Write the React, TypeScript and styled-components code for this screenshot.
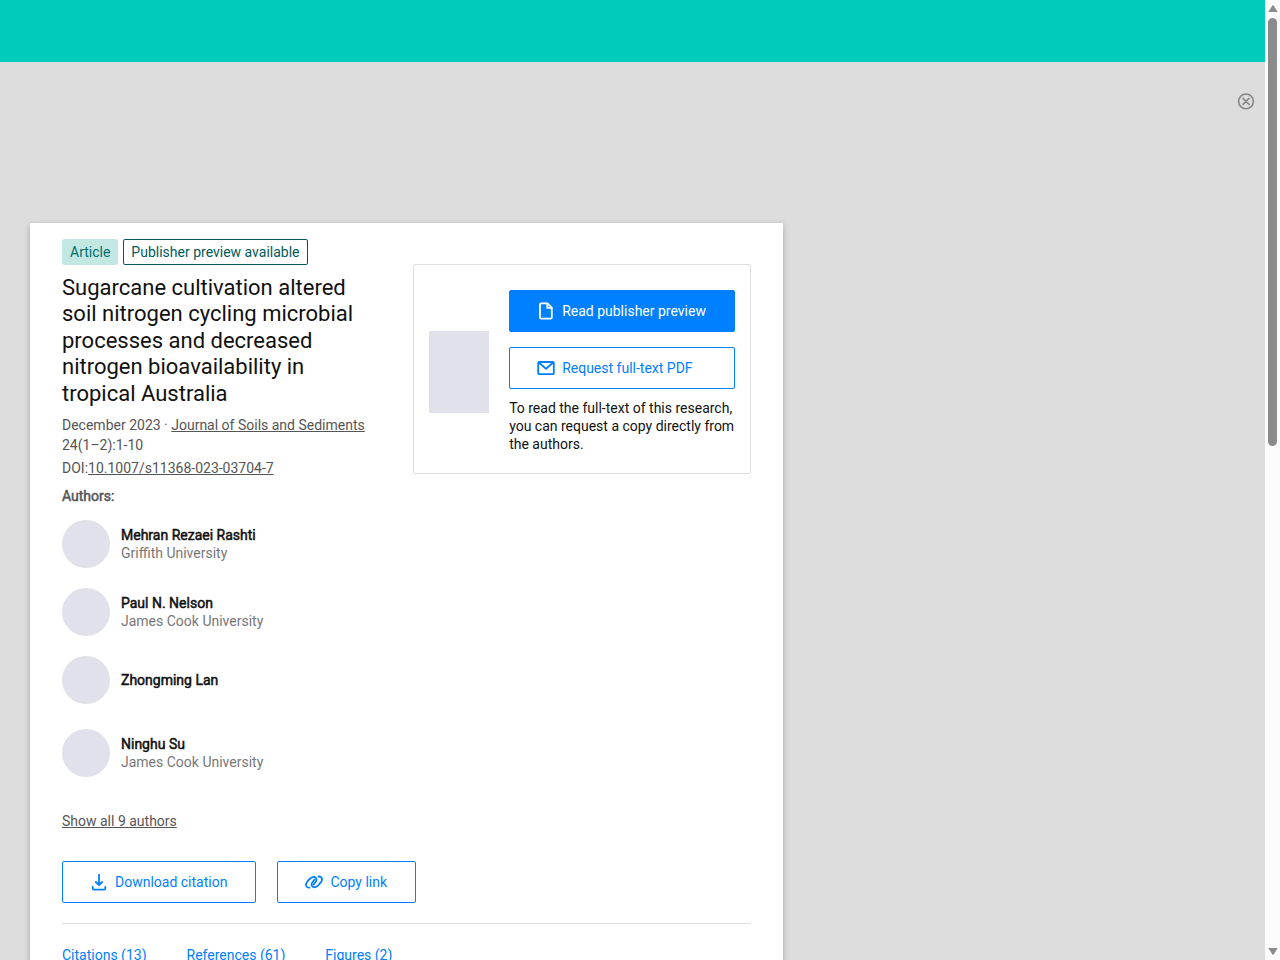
import React from "react";
import styled, { createGlobalStyle, css } from "styled-components";

const GlobalStyle = createGlobalStyle`
  *, *::before, *::after { box-sizing: border-box; }
  body {
    margin: 0;
    font-family: Roboto, "Liberation Sans", sans-serif;
    font-size: 14px;
    line-height: 20px;
    color: #111;
    background: #ddd;
  }
  h1, p, ul { margin: 0; padding: 0; }
`;

const Window = styled.div`
  display: flex;
  height: 100vh;
  overflow: hidden;
`;

const Page = styled.div`
  flex: 1;
  min-width: 0;
  overflow: hidden;
`;

const TopBar = styled.header`
  height: 62px;
  background: #00ccbb;
`;

const AdSpace = styled.div`
  display: flex;
  justify-content: flex-end;
  align-items: flex-start;
  height: 161px;
  padding: 30px 10px 0;
`;

const CloseButton = styled.button`
  display: flex;
  padding: 0;
  border: 0;
  background: none;
  color: #888;
  cursor: pointer;
`;

const Main = styled.main`
  padding: 0 30px;
`;

const Card = styled.article`
  width: 62.5%;
  padding: 16px 32px;
  background: #fff;
  box-shadow: 0 2px 6px rgba(0, 0, 0, 0.25);
`;

const Intro = styled.div`
  display: grid;
  grid-template-columns: minmax(0, 1fr) 338px;
  column-gap: 40px;
  align-items: start;
`;

const Badges = styled.div`
  display: flex;
  gap: 5px;
  white-space: nowrap;
`;

const Badge = styled.span<{ $outlined?: boolean }>`
  height: 26px;
  padding: 2px 7px;
  border: 1px solid ${(p) => (p.$outlined ? "#005a5a" : "#c3e7e3")};
  border-radius: 2px;
  background: ${(p) => (p.$outlined ? "#fff" : "#c3e7e3")};
  color: ${(p) => (p.$outlined ? "#005a5a" : "#00706e")};
`;

const Title = styled.h1`
  margin: 10px 0 8px;
  font-size: 22px;
  line-height: 1.2;
  font-weight: 400;
`;

const Meta = styled.p`
  color: #555;
  & + & { margin-top: 3px; }
`;

const TextLink = styled.a`
  color: #555;
  text-decoration: underline;
`;

const AuthorsLabel = styled.p`
  margin: 8px 0 14px;
  color: #555;
  -webkit-text-stroke: 0.5px #555;
`;

const AuthorList = styled.ul`
  display: flex;
  flex-direction: column;
  gap: 20px;
  list-style: none;
`;

const Author = styled.li<{ $single: boolean }>`
  display: flex;
  align-items: center;
  gap: 11px;
  line-height: 18px;
  ${(p) => p.$single && css`margin-bottom: 5px;`}
`;

const Avatar = styled.div`
  width: 48px;
  height: 48px;
  border-radius: 50%;
  background: #e1e1eb;
`;

const AuthorName = styled.a`
  display: block;
  color: #111;
  text-decoration: none;
  -webkit-text-stroke: 0.5px #111;
`;

const Affiliation = styled.span`
  color: #777;
`;

const ShowAll = styled.p`
  margin: 34px 0 30px;
`;

const AccessPanel = styled.aside`
  display: flex;
  align-items: center;
  gap: 20px;
  margin-top: 25px;
  padding: 25px 15px 20px;
  border: 1px solid #ddd;
  border-radius: 2px;
`;

const Thumbnail = styled.div`
  flex: none;
  width: 60px;
  height: 82px;
  background: #e1e1eb;
`;

const AccessActions = styled.div`
  flex: 1;
  display: flex;
  flex-direction: column;
  gap: 15px;
`;

const AccessNote = styled.p`
  margin-top: -5px;
  line-height: 18px;
`;

const Button = styled.button<{ $primary?: boolean }>`
  display: flex;
  align-items: center;
  gap: 7px;
  height: 42px;
  padding: 0 28px 0 27px;
  border: 1px solid #0080ff;
  border-radius: 2px;
  background: ${(p) => (p.$primary ? "#0080ff" : "#fff")};
  color: ${(p) => (p.$primary ? "#fff" : "#0080ff")};
  font: inherit;
  white-space: nowrap;
  cursor: pointer;
`;

const Actions = styled.div`
  display: flex;
  gap: 21px;
  padding-bottom: 20px;
  border-bottom: 1px solid #ddd;
`;

const Tabs = styled.nav`
  display: flex;
  gap: 40px;
  padding: 21px 0;
`;

const Tab = styled.a`
  color: #0080ff;
  text-decoration: none;
`;

const ScrollTrack = styled.div`
  flex: none;
  display: flex;
  flex-direction: column;
  align-items: center;
  width: 15px;
  padding: 4px 0;
  background: #fcfcfc;
`;

const ScrollThumb = styled.div`
  width: 9px;
  height: 45%;
  margin: 5px 0 auto;
  border-radius: 5px;
  background: #8b8b8b;
`;

const Svg = styled.svg`
  flex: none;
  fill: none;
  stroke: currentColor;
  stroke-linecap: round;
  stroke-linejoin: round;
`;

const FileIcon = () => (
  <Svg width="18" height="18" viewBox="0 0 18 18" strokeWidth="1.8" aria-hidden="true">
    <path d="M4.2 1.4h6.2l4.4 4.3v9.7q0 1.2-1.2 1.2H4.2q-1.2 0-1.2-1.2V2.6q0-1.2 1.2-1.2z" />
    <path d="M10.3 1.7v4.2h4.2" />
  </Svg>
);

const MailIcon = () => (
  <Svg width="18" height="18" viewBox="0 0 18 18" strokeWidth="1.8" aria-hidden="true">
    <rect x="1.2" y="3" width="15.6" height="12.2" rx="1" />
    <path d="M2 3.8l7 6 7-6" />
  </Svg>
);

const DownloadIcon = () => (
  <Svg width="18" height="18" viewBox="0 0 18 18" strokeWidth="1.8" aria-hidden="true">
    <path d="M9 1.6v10.2M5.8 9L9 12.1 12.2 9M2.7 13.8v1.6q0 1.2 1.2 1.2h10.2q1.2 0 1.2-1.2v-1.6" />
  </Svg>
);

const LinkIcon = () => (
  <Svg width="18" height="18" viewBox="0 0 18 18" strokeWidth="1.8" aria-hidden="true">
    <path d="M4.5 14.7C1.1 14.9.1 11.7 1.9 9.3l2.3-2.9C6.2 3.9 9.4 3.2 10.8 4.9c1.1 1.4.7 2.9-.4 4.3l-1.9 2.4" />
    <path d="M13.5 3.5c3.4-.2 4.4 3 2.6 5.4l-2.3 2.9c-2 2.5-5.2 3.2-6.6 1.5-1.1-1.4-.7-2.9.4-4.3l1.9-2.4" />
  </Svg>
);

const CloseIcon = () => (
  <Svg width="18" height="18" viewBox="0 0 18 18" strokeWidth="1.6" aria-hidden="true">
    <circle cx="9" cy="9.4" r="7.4" />
    <path d="M6 6.4l6 6M12 6.4l-6 6" />
  </Svg>
);

const ScrollArrow = ({ down = false }: { down?: boolean }) => (
  <svg width="10" height="9" viewBox="0 0 10 9" fill="#8b8b8b" aria-hidden="true">
    <path
      d={
        down
          ? "M1.2 1h7.6q1 0 .5.8L5.6 7.4q-.6.8-1.2 0L.7 1.8Q.2 1 1.2 1z"
          : "M1.2 8h7.6q1 0 .5-.8L5.6 1.6Q5 .8 4.4 1.6L.7 7.2Q.2 8 1.2 8z"
      }
    />
  </svg>
);

const authors = [
  { name: "Mehran Rezaei Rashti", affiliation: "Griffith University" },
  { name: "Paul N. Nelson", affiliation: "James Cook University" },
  { name: "Zhongming Lan", affiliation: "" },
  { name: "Ninghu Su", affiliation: "James Cook University" },
];

const tabs = ["Citations (13)", "References (61)", "Figures (2)"];

export default function App() {
  return (
    <>
      <GlobalStyle />
      <Window>
        <Page>
          <TopBar />
          <AdSpace>
            <CloseButton type="button" aria-label="Close">
              <CloseIcon />
            </CloseButton>
          </AdSpace>
          <Main>
            <Card>
              <Intro>
                <div>
                  <Badges>
                    <Badge>Article</Badge>
                    <Badge $outlined>Publisher preview available</Badge>
                  </Badges>
                  <Title>
                    Sugarcane cultivation altered soil nitrogen cycling microbial processes and
                    decreased nitrogen bioavailability in tropical Australia
                  </Title>
                  <Meta>
                    December 2023 · <TextLink href="#journal">Journal of Soils and Sediments</TextLink>{" "}
                    24(1–2):1-10
                  </Meta>
                  <Meta>
                    DOI:<TextLink href="#doi">10.1007/s11368-023-03704-7</TextLink>
                  </Meta>
                </div>
                <AccessPanel>
                  <Thumbnail />
                  <AccessActions>
                    <Button type="button" $primary>
                      <FileIcon />
                      Read publisher preview
                    </Button>
                    <Button type="button">
                      <MailIcon />
                      Request full-text PDF
                    </Button>
                    <AccessNote>
                      To read the full-text of this research, you can request a copy directly from
                      the authors.
                    </AccessNote>
                  </AccessActions>
                </AccessPanel>
              </Intro>
              <AuthorsLabel>Authors:</AuthorsLabel>
              <AuthorList>
                {authors.map((author) => (
                  <Author key={author.name} $single={!author.affiliation}>
                    <Avatar />
                    <div>
                      <AuthorName href="#author">{author.name}</AuthorName>
                      {author.affiliation && <Affiliation>{author.affiliation}</Affiliation>}
                    </div>
                  </Author>
                ))}
              </AuthorList>
              <ShowAll>
                <TextLink href="#authors">Show all 9 authors</TextLink>
              </ShowAll>
              <Actions>
                <Button type="button">
                  <DownloadIcon />
                  Download citation
                </Button>
                <Button type="button">
                  <LinkIcon />
                  Copy link
                </Button>
              </Actions>
              <Tabs>
                {tabs.map((tab) => (
                  <Tab key={tab} href="#section">
                    {tab}
                  </Tab>
                ))}
              </Tabs>
            </Card>
          </Main>
        </Page>
        <ScrollTrack>
          <ScrollArrow />
          <ScrollThumb />
          <ScrollArrow down />
        </ScrollTrack>
      </Window>
    </>
  );
}
